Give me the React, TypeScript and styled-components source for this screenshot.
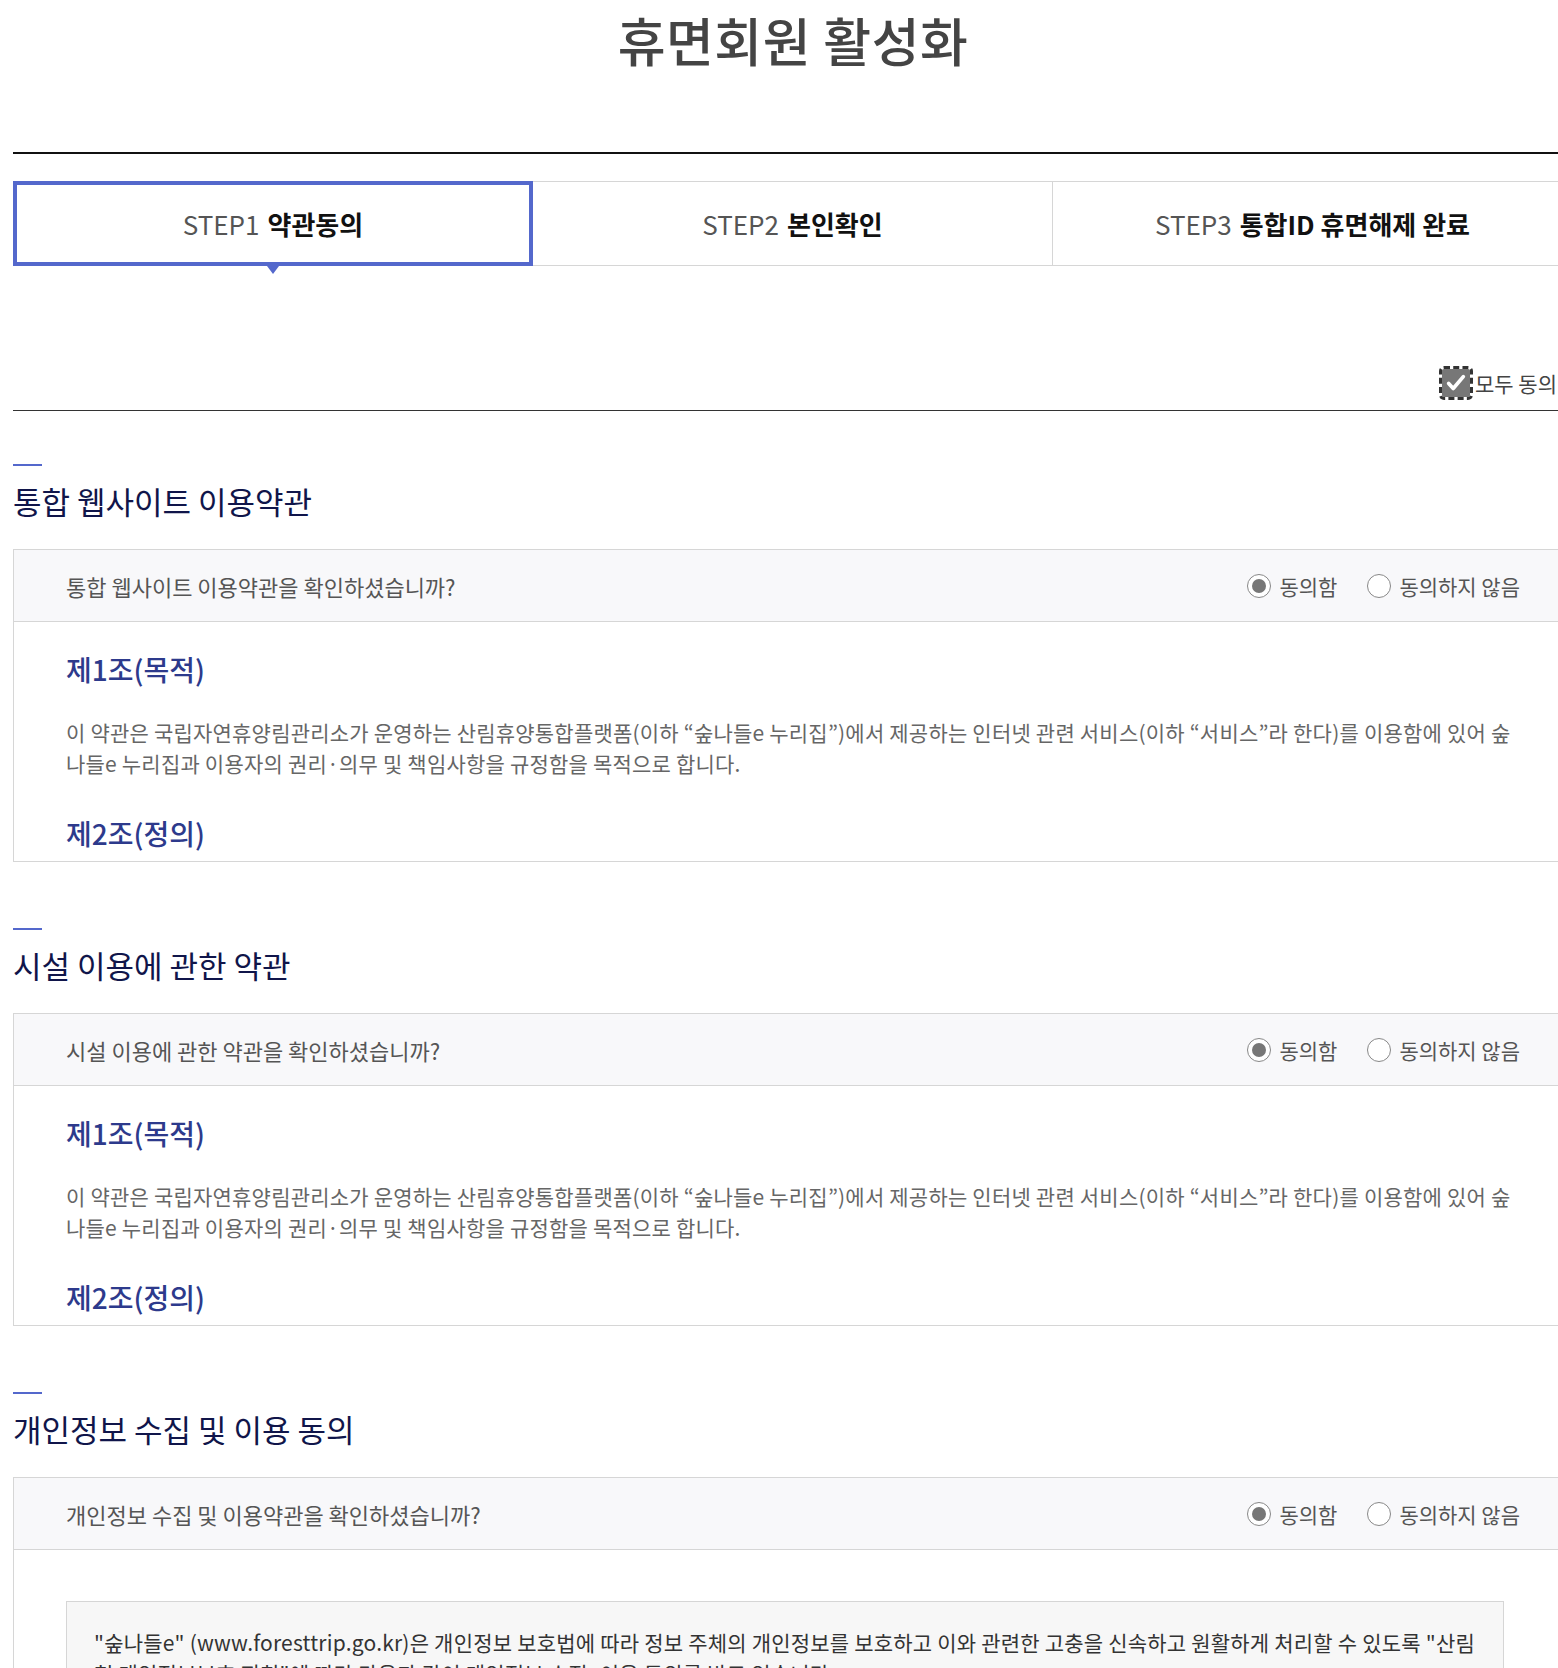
import styled, { createGlobalStyle } from 'styled-components';

const GlobalStyle = createGlobalStyle`
  html, body {
    margin: 0;
    padding: 0;
    background: #ffffff;
    overflow: hidden;
  }
  body {
    font-family: "Noto Sans CJK KR", "Noto Sans", sans-serif;
    color: #333333;
  }
  * {
    box-sizing: border-box;
  }
`;

const Page = styled.div`
  width: 1560px;
  margin-left: 13px;
`;

const PageTitle = styled.h2`
  margin: 0;
  padding-top: 10px;
  font-size: 52px;
  font-weight: 500;
  line-height: 60px;
  color: #444444;
  text-align: center;
  letter-spacing: 0.01em;
`;

const TitleRule = styled.hr`
  margin: 82px 0 0;
  border: 0;
  border-top: 2px solid #111111;
`;

const StepList = styled.ol`
  display: grid;
  grid-template-columns: repeat(3, 1fr);
  margin: 27px 0 0;
  padding: 0;
  list-style: none;
`;

const Step = styled.li<{ $active?: boolean }>`
  position: relative;
  display: flex;
  align-items: center;
  justify-content: center;
  height: 85px;
  font-size: 26px;
  border-top: 1px solid #d6d6d6;
  border-bottom: 1px solid #d6d6d6;
  border-right: 1px solid #d6d6d6;
  ${({ $active }) => $active && `
    border: 4px solid #5468cc;
    &::after {
      position: absolute;
      bottom: -12px;
      left: 50%;
      margin-left: -6px;
      border-top: 8px solid #5468cc;
      border-left: 6px solid transparent;
      border-right: 6px solid transparent;
      content: "";
    }
  `}
`;

const StepNo = styled.span`
  margin-right: 8px;
  font-weight: 400;
  color: #555555;
`;

const StepName = styled.strong`
  font-weight: 700;
  color: #111111;
`;

const AllAgreeRow = styled.div`
  display: flex;
  align-items: center;
  justify-content: flex-end;
  padding: 102px 16px 12px 0;
  border-bottom: 1px solid #333333;
`;

const CheckLabel = styled.label`
  display: flex;
  align-items: center;
  gap: 5px;
  font-size: 21px;
  line-height: 30px;
  color: #444444;
`;

const CheckBox = styled.span`
  display: inline-flex;
  align-items: center;
  justify-content: center;
  width: 28px;
  height: 28px;
  background: #777777;
  border-radius: 2px;
  outline: 3px dashed #333333;
  outline-offset: 0;
`;

const Section = styled.section<{ $first?: boolean }>`
  padding-top: ${({ $first }) => ($first ? '53px' : '66px')};
`;

const SectionBar = styled.span`
  display: block;
  width: 29px;
  height: 2px;
  background: #5468cc;
`;

const SectionTitle = styled.h3`
  margin: 14px 0 27px;
  font-size: 31px;
  font-weight: 400;
  line-height: 42px;
  color: #10154a;
`;

const TermsBox = styled.div`
  border: 1px solid #d6d6d6;
`;

const TermsHead = styled.div`
  display: flex;
  align-items: center;
  justify-content: space-between;
  height: 72px;
  padding: 0 52px;
  background: #f8f8fa;
  border-bottom: 1px solid #d6d6d6;
`;

const Question = styled.p`
  margin: 0;
  font-size: 22px;
  color: #555555;
`;

const RadioGroup = styled.div`
  display: flex;
  align-items: center;
  gap: 30px;
`;

const RadioLabel = styled.label`
  display: flex;
  align-items: center;
  gap: 8px;
  font-size: 21px;
  color: #555555;
`;

const Radio = styled.input`
  appearance: none;
  display: inline-flex;
  align-items: center;
  justify-content: center;
  width: 24px;
  height: 24px;
  margin: 0;
  border: 1.5px solid #888888;
  border-radius: 50%;
  background: #ffffff;

  &:checked::before {
    width: 14px;
    height: 14px;
    border-radius: 50%;
    background: #777777;
    content: "";
  }
`;

const TermsBody = styled.div<{ $height: number }>`
  height: ${({ $height }) => $height}px;
  padding: 27px 52px 0;
  overflow: hidden;
`;

const ArticleTitle = styled.h4`
  margin: 0;
  font-size: 28px;
  font-weight: 500;
  line-height: 40px;
  color: #2d3a8c;
`;

const ArticleText = styled.p`
  margin: 28px 0 34px;
  font-size: 21px;
  line-height: 31px;
  letter-spacing: 0.01em;
  color: #666666;
`;

const NoticeBox = styled.div`
  margin: 24px 16px 0 0;
  padding: 25px 27px;
  background: #f7f7f7;
  border: 1px solid #d6d6d6;
  font-size: 21px;
  line-height: 31px;
  letter-spacing: 0.01em;
  color: #333333;
`;

const ARTICLE_TEXT =
  '이 약관은 국립자연휴양림관리소가 운영하는 산림휴양통합플랫폼(이하 “숲나들e 누리집”)에서 제공하는 인터넷 관련 서비스(이하 “서비스”라 한다)를 이용함에 있어 숲나들e 누리집과 이용자의 권리·의무 및 책임사항을 규정함을 목적으로 합니다.';

const SECTIONS = [
  { title: '통합 웹사이트 이용약관', question: '통합 웹사이트 이용약관을 확인하셨습니까?', name: 'site' },
  { title: '시설 이용에 관한 약관', question: '시설 이용에 관한 약관을 확인하셨습니까?', name: 'facility' },
];

function AgreeRadios({ name }: { name: string }) {
  return (
    <RadioGroup>
      <RadioLabel>
        <Radio type="radio" name={name} defaultChecked />
        동의함
      </RadioLabel>
      <RadioLabel>
        <Radio type="radio" name={name} />
        동의하지 않음
      </RadioLabel>
    </RadioGroup>
  );
}

export default function App() {
  return (
    <Page>
      <GlobalStyle />
      <PageTitle>휴면회원 활성화</PageTitle>
      <TitleRule />

      <StepList>
        <Step $active>
          <StepNo>STEP1</StepNo>
          <StepName>약관동의</StepName>
        </Step>
        <Step>
          <StepNo>STEP2</StepNo>
          <StepName>본인확인</StepName>
        </Step>
        <Step>
          <StepNo>STEP3</StepNo>
          <StepName>통합ID 휴면해제 완료</StepName>
        </Step>
      </StepList>

      <AllAgreeRow>
        <CheckLabel>
          <CheckBox>
            <svg width="22" height="22" viewBox="0 0 24 24" fill="none">
              <path d="M4 12.5l5 5.5L20 5" stroke="#ffffff" strokeWidth="4" strokeLinecap="round" strokeLinejoin="round" />
            </svg>
          </CheckBox>
          모두 동의
        </CheckLabel>
      </AllAgreeRow>

      {SECTIONS.map((section, index) => (
        <Section key={section.name} $first={index === 0}>
          <SectionBar />
          <SectionTitle>{section.title}</SectionTitle>
          <TermsBox>
            <TermsHead>
              <Question>{section.question}</Question>
              <AgreeRadios name={section.name} />
            </TermsHead>
            <TermsBody $height={239}>
              <ArticleTitle>제1조(목적)</ArticleTitle>
              <ArticleText>{ARTICLE_TEXT}</ArticleText>
              <ArticleTitle>제2조(정의)</ArticleTitle>
            </TermsBody>
          </TermsBox>
        </Section>
      ))}

      <Section>
        <SectionBar />
        <SectionTitle>개인정보 수집 및 이용 동의</SectionTitle>
        <TermsBox>
          <TermsHead>
            <Question>개인정보 수집 및 이용약관을 확인하셨습니까?</Question>
            <AgreeRadios name="privacy" />
          </TermsHead>
          <TermsBody $height={239}>
            <NoticeBox>
              "숲나들e" (www.foresttrip.go.kr)은 개인정보 보호법에 따라 정보 주체의 개인정보를 보호하고 이와 관련한 고충을 신속하고 원활하게 처리할 수 있도록 "산림청 개인정보보호 지침"에 따라 다음과 같이 개인정보 수집·이용 동의를 받고 있습니다.
            </NoticeBox>
          </TermsBody>
        </TermsBox>
      </Section>
    </Page>
  );
}
